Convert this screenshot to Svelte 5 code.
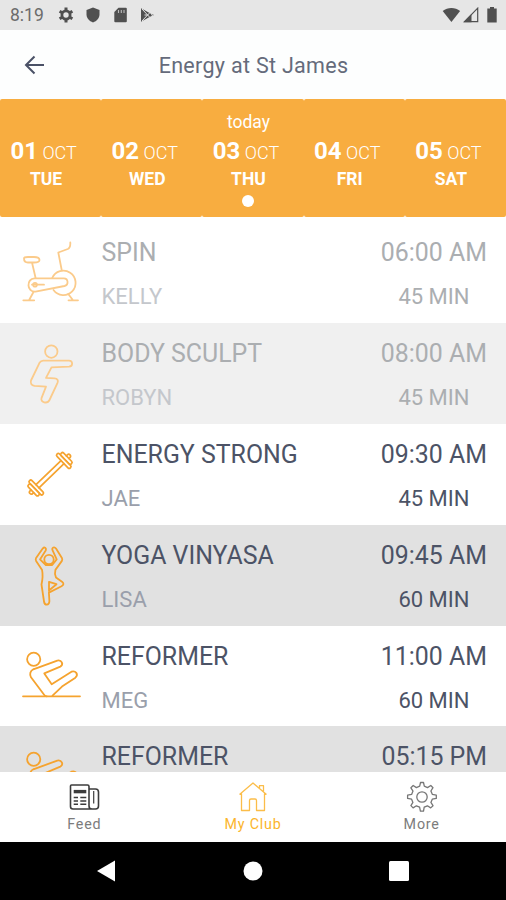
<script>
  const days = [
    { date: '01', month: 'OCT', name: 'TUE' },
    { date: '02', month: 'OCT', name: 'WED' },
    { date: '03', month: 'OCT', name: 'THU', today: true },
    { date: '04', month: 'OCT', name: 'FRI' },
    { date: '05', month: 'OCT', name: 'SAT' }
  ];

  const classes = [
    { title: 'SPIN', coach: 'KELLY', time: '06:00 AM', length: '45 MIN', icon: 'bike', past: true },
    { title: 'BODY SCULPT', coach: 'ROBYN', time: '08:00 AM', length: '45 MIN', icon: 'squat', past: true },
    { title: 'ENERGY STRONG', coach: 'JAE', time: '09:30 AM', length: '45 MIN', icon: 'dumbbell' },
    { title: 'YOGA VINYASA', coach: 'LISA', time: '09:45 AM', length: '60 MIN', icon: 'yoga' },
    { title: 'REFORMER', coach: 'MEG', time: '11:00 AM', length: '60 MIN', icon: 'pilates' },
    { title: 'REFORMER', time: '05:15 PM', icon: 'pilates' }
  ];

  const tabs = [
    { id: 'feed', label: 'Feed' },
    { id: 'club', label: 'My Club' },
    { id: 'more', label: 'More' }
  ];
  let activeTab = $state('club');
</script>

<div class="phone">
  <div class="status">
    <span class="clock">8:19</span>
    <svg class="st-gear" width="16" height="16" viewBox="0 0 16 16">
      <circle cx="8" cy="8" r="4.1" fill="none" stroke="#505050" stroke-width="2.8" />
      <path d="M8 .6v3M8 12.4v3M1.6 4.3l2.6 1.5M11.8 10.2l2.6 1.5M1.6 11.7l2.6-1.5M11.8 5.8l2.6-1.5" stroke="#505050" stroke-width="3" />
    </svg>
    <svg class="st-shield" width="14" height="16" viewBox="0 0 14 16">
      <path d="M7 .5l6.500 2.600v4.400c0 3.700-2.700 6.600-6.500 7.900C3.200 14.100.5 11.200.5 7.500V3.100z" fill="#505050" />
    </svg>
    <svg class="st-card" width="13" height="16" viewBox="0 0 13 16">
      <path d="M4.500.8h7.300q1 0 1 1v12.400q0 1-1 1H1.300q-1 0-1-1V5z" fill="#505050" />
      <path d="M4.500 3v3M7.300 3v3M10 3v3" stroke="#bbb" stroke-width="1.100" />
    </svg>
    <svg class="st-play" width="15" height="16" viewBox="0 0 15 16">
      <path d="M1 1.200l9.500 5.200L14 8l-3.500 1.600L1 14.800z" fill="#505050" />
      <path d="M2 2l7.500 8M2 14l7.500-8M4.500 8h3M11 6l2 4" stroke="#e6e6e6" stroke-width="1" />
    </svg>
    <span class="fill"></span>
    <svg width="19" height="16" viewBox="0 0 19 16">
      <path d="M.7 3.900C5.600-.1 13.200-.1 18.100 3.900L9.400 15z" fill="#505050" />
    </svg>
    <svg class="st-signal" width="16" height="16" viewBox="0 0 16 16">
      <path d="M1.500 14.700L14.700 1.200v13.500z" fill="none" stroke="#505050" stroke-width="1.200" />
      <path d="M.5 15.200L8.500 7v8.200z" fill="#505050" />
    </svg>
    <svg class="st-battery" width="10" height="16" viewBox="0 0 10 16">
      <path d="M3 0h4v1.500h2.700V15.500H.3V1.500H3z" fill="#505050" />
    </svg>
  </div>

  <header class="topbar">
    <svg class="back" width="22" height="22" viewBox="0 0 22 22">
      <path d="M20 11H2M10.500 2.500L2 11l8.500 8.500" fill="none" stroke="#4a5166" stroke-width="2" />
    </svg>
    <h1>Energy at St James</h1>
  </header>

  <div class="days">
    {#each days as day}
      <div class="day">
        <span class="today">{day.today ? 'today' : ''}</span>
        <div class="date"><b>{day.date}</b> <span>{day.month}</span></div>
        <div class="weekday">{day.name}</div>
        {#if day.today}<span class="dot"></span>{/if}
      </div>
    {/each}
  </div>

  <main class="list">
    {#each classes as item}
      <div class="row" class:past={item.past}>
        <svg class="sport" width="64" height="64" viewBox="0 0 64 64">
          {#if item.icon === 'bike'}
            <path d="M51.300 1.500c.2 3.500-.3 5.500-2.500 6.500l-9.500 3.500 3.400 17.500" />
            <path d="M5 17.500q0-1.500 4-1.500h6c3 0 5.500 1 5.500 3 0 2-2.500 2.500-5.500 2.500H9c-3 0-4-2-4-4zM13 21.500l3.600 15.500" />
            <path d="M33.200 37a12.200 12.200 0 1 1 1.300 12" />
            <path d="M15.500 37.300h29.300c4.700 0 5 6.700.7 7.700l-29 5.700c-9 .6-9.400-13-1-13.400z" />
            <circle cx="16" cy="43.700" r="1.900" />
            <path d="M13 43.700h12M14.500 51l-4.200 7.700M4.300 59.300h10.900M49.300 53l4.300 5.700M49.500 59.300H59" />
          {:else if item.icon === 'squat'}
            <circle cx="32.300" cy="9.600" r="6.200" />
            <path d="M24.300 18.600H50c4 0 4.300 5.800 0 6.100L32.500 25.300 27 35.900l8.500.4c3 .2 4 2 3 4.600L30.500 58c-2 4.200-9.300 2.500-8-1.800L27 44.700l-11.500-.8c-3.200-.4-4.300-2.900-3.500-5.400l8.500-17.700c1-1.600 1.900-2.200 3.800-2.200z" />
          {:else if item.icon === 'dumbbell'}
            <g transform="translate(31 31.200) rotate(-44) scale(.94)">
              <path d="M-18.500-2.300h37M-18.500 2.300h37" />
              <rect x="18.500" y="-10.200" width="3.700" height="20.400" rx="1.800" />
              <rect x="22.200" y="-7.800" width="3.900" height="15.600" rx="1.800" />
              <path d="M26.100-2h1.500q2 0 2 2t-2 2h-1.500" />
              <rect x="-22.200" y="-10.200" width="3.700" height="20.400" rx="1.800" />
              <rect x="-26.100" y="-7.800" width="3.900" height="15.600" rx="1.800" />
              <path d="M-26.100-2h-1.500q-2 0-2 2t2 2h1.500" />
            </g>
          {:else if item.icon === 'yoga'}
            <circle cx="30" cy="15.500" r="4.700" />
            <path d="M26.700 6.600c1-3-1.400-4-3-2l-6.600 9.300c-.6 1-.6 1.800 0 3l6 9.200c.8 4 .6 8.900-.6 14.400L25 57.500c.6 4.200 5.200 4.200 5.400-.2l-.5-8.700 12.600-6.300c2.300-1.300 2.500-3 .8-4.400L37 33.500c-1-2-1.300-5-.6-7.600l6.500-9c.5-1 .5-2 0-3L37 4.500c-1.700-2.300-4.400-.8-3.500 1.700l4.200 9.200-4.500 5.600h-6.400L21 15.400z" />
            <path d="M30 47V37.800l7.500 2.400L30 46.500" />
          {:else}
            <circle cx="14.700" cy="14.300" r="6.600" />
            <path d="M14.300 24.300l24-8.700c4.400-1 6.700 4 3 6L25.300 28.400l7.400 10.800 19.800-12.500c4-1.400 7.500 2.600 3.900 6L43 41.600l-9.500 9M25.300 50L12 32.300c-1.700-3-.8-6.400 2.300-8M25.300 50q1 1.300 2.500 1.300" />
            <path d="M4 51.300h57" />
          {/if}
        </svg>
        <div class="what">
          <div class="title">{item.title}</div>
          <div class="coach">{item.coach}</div>
        </div>
        <div class="when">
          <div class="time">{item.time}</div>
          <div class="length">{item.length}</div>
        </div>
      </div>
    {/each}
  </main>

  <nav class="tabs">
    {#each tabs as tab}
      <button class="tab" class:active={tab.id === activeTab} onclick={() => (activeTab = tab.id)}>
        <svg width="32" height="32" viewBox="0 0 32 32">
          {#if tab.id === 'feed'}
            <g stroke="#3c3c3c" stroke-width="1.600">
              <path d="M3.500 4h16q1.500 0 1.500 1.500V25q0 3 3 3H5q-2.500 0-2.500-2.500V5q0-1 1-1zM21 8h6.500q3 0 3 3v14q0 3-3 3H24" />
              <path d="M25.700 10v12.500" stroke-width="1.200" />
              <path d="M5.700 10.600h12.600" stroke-width="3.400" />
              <path d="M5.700 16.600H10M12.300 16.600h6M5.700 19.900H10M12.300 19.900h6M5.700 23.200H10M12.300 23.200h6" stroke-width="1.500" />
            </g>
          {:else if tab.id === 'club'}
            <path d="M2.500 13.500L16 2l13.500 11.500M4.500 12.500v17h8v-10q0-1.500 1.500-1.500h4q1.500 0 1.500 1.500v10h8v-17M22.500 7V4.700h4v5.500" />
          {:else}
            <circle cx="16" cy="16" r="5.200" />
            <path d="M14.500 1.500h3l.8 3.700 3.200 1.400 3.300-2.100 2.200 2.200-2.100 3.300 1.400 3.300 4 .8v3.300l-4 .8-1.400 3.200 2.100 3.300-2.300 2.200-3.300-2.100-3.200 1.400-.7 4h-3.100l-.8-4-3.200-1.400-3.300 2.100-2.200-2.300 2-3.200-1.300-3.200-4-.8v-3.200l4-.8 1.400-3.300L4.900 6.800l2.300-2.300 3.200 2.100 3.300-1.400z" />
          {/if}
        </svg>
        <span>{tab.label}</span>
      </button>
    {/each}
  </nav>

  <div class="softkeys">
    <svg width="20" height="22" viewBox="0 0 20 22"><path d="M1 11L19 .5v21z" fill="#fff" /></svg>
    <svg width="20" height="20" viewBox="0 0 20 20"><circle cx="10" cy="10" r="9.500" fill="#fff" /></svg>
    <svg width="20" height="20" viewBox="0 0 20 20"><rect width="20" height="20" rx="1.500" fill="#fff" /></svg>
  </div>
</div>

<style>
  :global(body) {
    margin: 0;
    background: #fff;
  }

  .phone {
    width: 506px;
    height: 900px;
    display: flex;
    flex-direction: column;
    overflow: hidden;
    background: #fff;
    font-family: Roboto, 'Liberation Sans', sans-serif;
    color: #4c5366;
  }

  svg {
    display: block;
    flex: none;
  }

  .status {
    height: 30px;
    flex: none;
    box-sizing: border-box;
    display: flex;
    align-items: center;
    padding: 0 9px 0 10px;
    background: #e6e6e6;
  }

  .clock {
    width: 48px;
    font-size: 17.5px;
    line-height: 32px;
    color: #6c6c6c;
  }

  .st-shield { margin-left: 12px; }
  .st-card { margin-left: 14px; }
  .st-play { margin-left: 13px; }
  .st-signal { margin-left: 2px; }
  .st-battery { margin-left: 8px; }
  .fill { flex: 1; }

  .topbar {
    height: 69px;
    flex: none;
    display: grid;
    grid-template-columns: 60px 1fr 60px;
    align-items: center;
    background: #fdfefe;
  }

  .back {
    margin-left: 24px;
  }

  h1 {
    margin: 1px 0 0 1px;
    text-align: center;
    font-size: 21.5px;
    font-weight: 400;
    letter-spacing: 0.3px;
    color: #656b7b;
  }

  .days {
    height: 118px;
    flex: none;
    display: grid;
    grid-template-columns: repeat(5, 1fr);
  }

  .day {
    box-sizing: border-box;
    display: flex;
    flex-direction: column;
    align-items: center;
    padding: 12px 9px 0 0;
    border-radius: 2px;
    background: #f8ad40;
    color: #fff;
  }

  .today {
    height: 22px;
    font-size: 17.5px;
    line-height: 22px;
  }

  .date {
    margin: 3px 5px 0 0;
    font-size: 18px;
    line-height: 30px;
    white-space: nowrap;
  }

  .date b {
    font-size: 24px;
  }

  .date span {
    font-weight: 300;
  }

  .weekday {
    font-size: 17.5px;
    font-weight: 700;
    line-height: 22px;
  }

  .dot {
    width: 12px;
    height: 12px;
    margin-top: 5px;
    border-radius: 50%;
    background: #fff;
  }

  .list {
    flex: 1;
    min-height: 0;
    padding-top: 5.4px;
    overflow: hidden;
  }

  .row {
    height: 100.8px;
    box-sizing: border-box;
    display: flex;
    padding: 19px 19px 0;
    background: #fff;
  }

  .row:nth-child(even) {
    background: #e1e1e1;
  }

  .row.past:nth-child(even) {
    background: #f0f0f0;
  }

  .sport {
    fill: none;
    stroke: #f5a32f;
    stroke-width: 1.8;
    stroke-linecap: round;
    stroke-linejoin: round;
  }

  .past .sport {
    stroke: #fbcb8b;
  }

  .what {
    flex: 1;
    margin-left: 18.5px;
  }

  .when {
    display: flex;
    flex-direction: column;
    align-items: center;
  }

  .title,
  .time {
    margin-top: -1px;
    font-size: 24.9px;
    line-height: 26px;
    white-space: nowrap;
  }

  .coach,
  .length {
    margin-top: 19px;
    font-size: 22px;
    line-height: 24px;
  }

  .coach { color: #9a9fab; }
  .past .title, .past .time, .past .length { color: #abaeb1; }
  .past .coach { color: #c4c7cc; }

  .tabs {
    height: 70px;
    flex: none;
    display: grid;
    grid-template-columns: repeat(3, 1fr);
    background: #fff;
  }

  .tab {
    display: flex;
    flex-direction: column;
    align-items: center;
    padding: 9px 0 0;
    border: 0;
    background: none;
    font: 400 14.3px/20px Roboto, 'Liberation Sans', sans-serif;
    letter-spacing: 0.8px;
    color: #7c7c7c;
  }

  .tab svg {
    fill: none;
    stroke: #777;
    stroke-width: 1.3;
    stroke-linejoin: round;
  }

  .tab span {
    margin-top: 1px;
  }

  .tab.active { color: #fbb52c; }
  .tab.active svg { stroke: #fbbd49; }

  .softkeys {
    height: 58px;
    flex: none;
    box-sizing: border-box;
    display: flex;
    justify-content: space-between;
    align-items: center;
    padding: 0 97px 0 96px;
    background: #000;
  }
</style>
